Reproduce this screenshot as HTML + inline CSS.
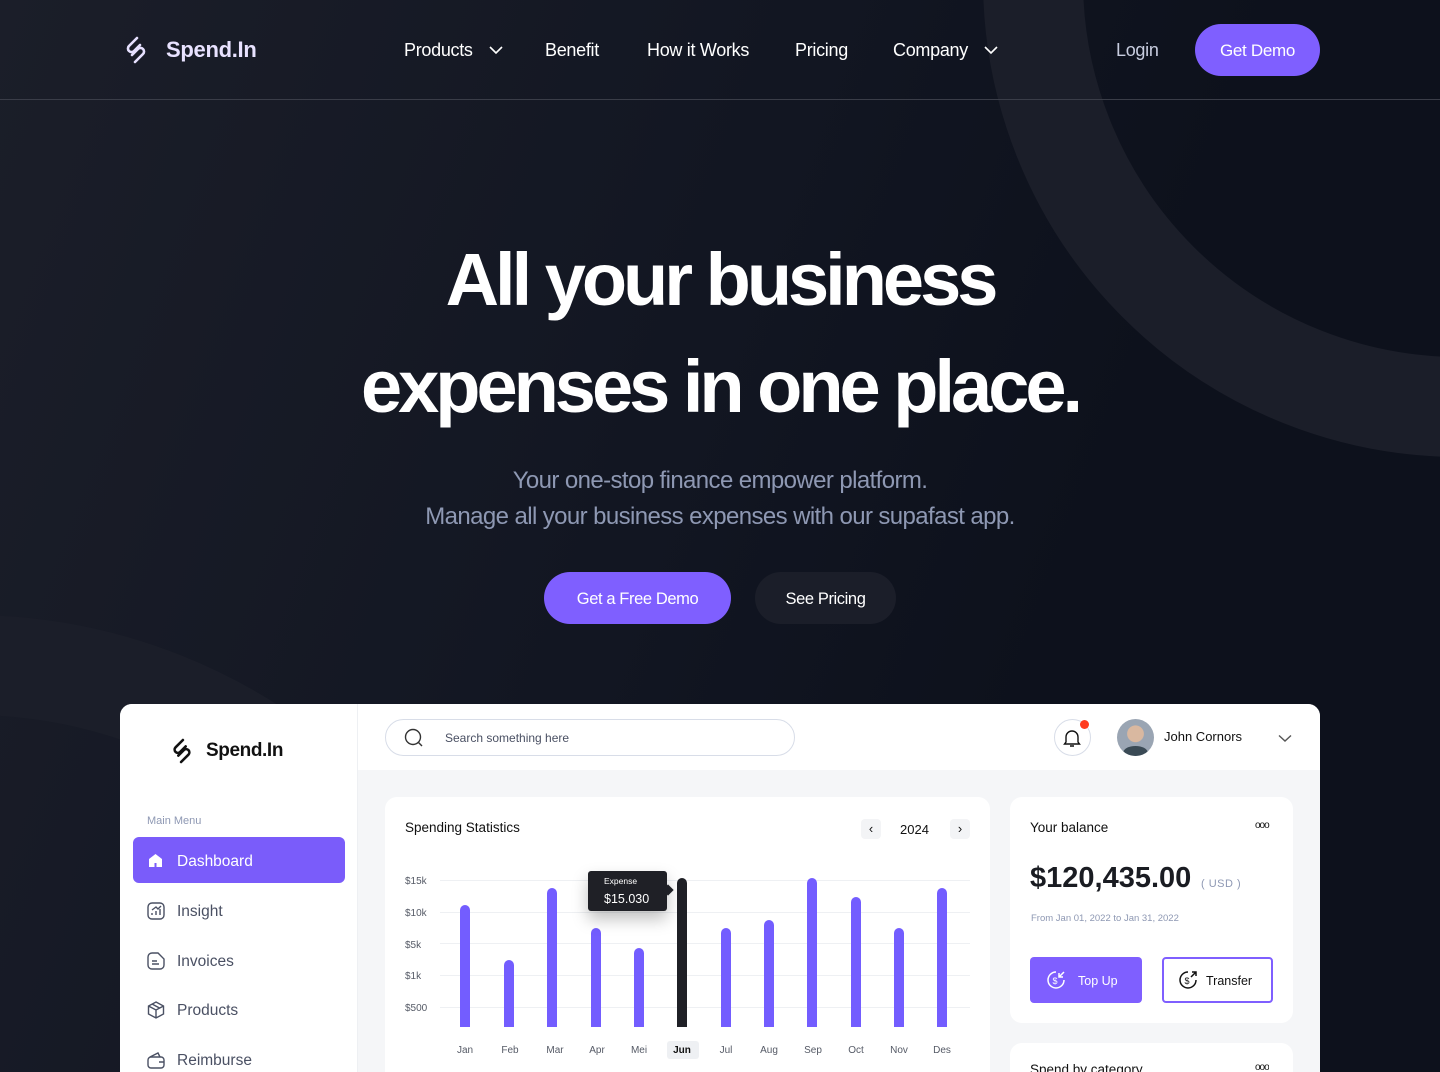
<!DOCTYPE html>
<html><head><meta charset="utf-8"><style>
*{margin:0;padding:0;box-sizing:border-box}
html,body{width:1440px;height:1072px;overflow:hidden}
body{background:#0d111c;font-family:"Liberation Sans",sans-serif;position:relative}
.a{position:absolute}
.bg{left:0;top:0;width:1440px;height:1072px;background:linear-gradient(110deg,#1b1e29 0%,#121622 45%,#0d111c 70%)}
.nav{color:#fff;font-size:18px;top:40px;letter-spacing:-0.3px}
.card{background:#fff;border-radius:12px}
.mi{left:147px;font-size:15.5px;color:#4a5063}
.lbl{font-size:10px;color:#555a66}
.mon{font-size:10px;color:#555a66;top:1045px;width:40px;text-align:center}
.bar{width:10px;background:#735dff;border-radius:5px 5px 0 0}
</style></head><body>
<div class="a bg"></div>
<svg class="a" style="left:0;top:0" width="1440" height="1072">
<circle cx="1460" cy="-20" r="427" fill="none" stroke="#1b1e29" stroke-width="100"/>
<circle cx="-30" cy="1187" r="522" fill="none" stroke="#1b1e29" stroke-width="100"/>
</svg>
<div class="a" style="left:0;top:99px;width:1440px;height:1px;background:#3a3d48"></div>
<svg class="a" style="left:124px;top:35px" width="24" height="30" viewBox="0 0 24 30"><path d="M13 3 L5 11 a3.5 3.5 0 0 0 5 5 L16 10 M11 27 L19 19 a3.5 3.5 0 0 0 -5 -5 L8 20" fill="none" stroke="#e6e0ff" stroke-width="2.6" stroke-linecap="round"/></svg>
<div class="a" style="left:166px;top:37px;color:#e8e2ff;font-size:22px;font-weight:bold;letter-spacing:-0.3px">Spend.In</div>
<div class="a nav" style="left:404px">Products</div>
<svg class="a" style="left:489px;top:45px" width="14" height="10"><path d="M1 2l6 6 6-6" fill="none" stroke="#fff" stroke-width="1.6"/></svg>
<div class="a nav" style="left:545px">Benefit</div>
<div class="a nav" style="left:647px">How it Works</div>
<div class="a nav" style="left:795px">Pricing</div>
<div class="a nav" style="left:893px">Company</div>
<svg class="a" style="left:984px;top:45px" width="14" height="10"><path d="M1 2l6 6 6-6" fill="none" stroke="#fff" stroke-width="1.6"/></svg>
<div class="a nav" style="left:1116px;color:#c8cde0">Login</div>
<div class="a" style="left:1195px;top:24px;width:125px;height:52px;border-radius:26px;background:#7f5fff;color:#fff;font-size:17px;text-align:center;line-height:54px;letter-spacing:-0.3px">Get Demo</div>
<div class="a" style="left:0;width:1440px;top:226px;text-align:center;color:#fff;font-size:74px;font-weight:bold;letter-spacing:-4px;line-height:107px">All your business<br>expenses in one place.</div>
<div class="a" style="left:0;width:1440px;top:463px;text-align:center;color:#8e98b3;font-size:24px;line-height:36px;letter-spacing:-0.6px">Your one-stop finance empower platform.<br>Manage all your business expenses with our supafast app.</div>
<div class="a" style="left:544px;top:572px;width:187px;height:52px;border-radius:26px;background:#7f5fff;color:#fff;font-size:16.5px;text-align:center;line-height:54px;letter-spacing:-0.4px">Get a Free Demo</div>
<div class="a" style="left:755px;top:572px;width:141px;height:52px;border-radius:26px;background:#1b1e29;color:#fff;font-size:16.5px;text-align:center;line-height:54px;letter-spacing:-0.4px">See Pricing</div>
<div class="a" style="left:120px;top:704px;width:1200px;height:368px;background:#f5f6f8;border-radius:12px 12px 0 0;overflow:hidden">
 <div class="a" style="left:0;top:0;width:238px;height:368px;background:#fff;border-right:1px solid #eef0f3"></div>
 <div class="a" style="left:238px;top:0;width:962px;height:66px;background:#fff"></div>
 <div class="a card" style="left:265px;top:93px;width:605px;height:300px"></div>
 <div class="a card" style="left:890px;top:339px;width:283px;height:60px"></div>
</div>
<svg class="a" style="left:171px;top:737px" width="22" height="28" viewBox="0 0 24 30"><path d="M13 3 L5 11 a3.5 3.5 0 0 0 5 5 L16 10 M11 27 L19 19 a3.5 3.5 0 0 0 -5 -5 L8 20" fill="none" stroke="#111" stroke-width="2.8" stroke-linecap="round"/></svg>
<div class="a" style="left:206px;top:740px;font-size:19px;font-weight:bold;color:#111;letter-spacing:-0.4px">Spend.In</div>
<div class="a" style="left:147px;top:815px;font-size:11px;color:#8e98b3">Main Menu</div>
<div class="a" style="left:133px;top:837px;width:212px;height:46px;border-radius:6px;background:#7a5cfa"></div>
<svg class="a" style="left:147px;top:852px" width="17" height="17"><path d="M2 7l6.5-5 6.5 5v8H2z" fill="#fff"/><rect x="7.5" y="11" width="2" height="4" fill="#7a5cfa"/></svg>
<div class="a" style="left:177px;top:853px;color:#fff;font-size:15.5px">Dashboard</div>
<svg class="a" style="left:147px;top:902px" width="18" height="18" fill="none" stroke="#4a5063" stroke-width="1.4"><rect x="1" y="1" width="16" height="16" rx="4"/><path d="M5 13v-2M9 13V9M13 13V7M5 8l4-3 2 2 3-3"/></svg>
<div class="a mi" style="left:177px;top:903px">Insight</div>
<svg class="a" style="left:147px;top:952px" width="18" height="18" fill="none" stroke="#4a5063" stroke-width="1.4"><path d="M5 1h6l6 6v6a4 4 0 0 1-4 4H5a4 4 0 0 1-4-4V5a4 4 0 0 1 4-4z"/><path d="M5 9h5M5 12h7"/></svg>
<div class="a mi" style="left:177px;top:953px">Invoices</div>
<svg class="a" style="left:147px;top:1001px" width="18" height="18" fill="none" stroke="#4a5063" stroke-width="1.4"><path d="M9 1l7.5 4v8L9 17l-7.5-4V5zM1.5 5L9 9l7.5-4M9 9v8M5 3l7.5 4"/></svg>
<div class="a mi" style="left:177px;top:1002px">Products</div>
<svg class="a" style="left:147px;top:1051px" width="18" height="18" fill="none" stroke="#4a5063" stroke-width="1.4"><rect x="1" y="6" width="16" height="11" rx="3"/><path d="M3 6l8-4 2 4M12 11h5"/></svg>
<div class="a mi" style="left:177px;top:1052px">Reimburse</div>
<div class="a" style="left:385px;top:719px;width:410px;height:37px;border:1px solid #d8dde8;border-radius:19px"></div>
<svg class="a" style="left:404px;top:728px" width="20" height="20" fill="none" stroke="#333" stroke-width="1.4"><circle cx="9" cy="9" r="7.5"/><path d="M14.5 14.5l3.5 3.5"/></svg>
<div class="a" style="left:445px;top:731px;font-size:12px;color:#4a5063">Search something here</div>
<div class="a" style="left:1054px;top:719px;width:37px;height:37px;border:1px solid #d8dde8;border-radius:50%"></div>
<svg class="a" style="left:1063px;top:728px" width="18" height="20" fill="none" stroke="#111" stroke-width="1.4"><path d="M3 14V9a6 6 0 0 1 12 0v5l1.5 2h-15zM7 18h4"/></svg>
<div class="a" style="left:1080px;top:720px;width:9px;height:9px;border-radius:50%;background:#ff3b1f"></div>
<div class="a" style="left:1117px;top:719px;width:37px;height:37px;border-radius:50%;background:radial-gradient(circle at 50% 40%,#d9b8a0 0 28%,#9aa5b3 30%);overflow:hidden"><div class="a" style="left:6px;top:27px;width:25px;height:14px;border-radius:50%;background:#3a4a55"></div></div>
<div class="a" style="left:1164px;top:729px;font-size:13px;color:#111">John Cornors</div>
<svg class="a" style="left:1278px;top:734px" width="14" height="9"><path d="M1 1.5l6 5.5 6-5.5" fill="none" stroke="#555" stroke-width="1.4"/></svg>
<div class="a" style="left:405px;top:820px;font-size:13.5px;color:#111">Spending Statistics</div>
<div class="a" style="left:861px;top:819px;width:20px;height:20px;background:#f3f4f6;border-radius:4px;font-size:13px;text-align:center;line-height:20px;color:#111">&#8249;</div>
<div class="a" style="left:900px;top:822px;font-size:13px;color:#111">2024</div>
<div class="a" style="left:950px;top:819px;width:20px;height:20px;background:#f3f4f6;border-radius:4px;font-size:13px;text-align:center;line-height:20px;color:#111">&#8250;</div>
<div class="a" style="left:440px;top:880px;width:530px;height:1px;background:#eef0f3"></div>
<div class="a" style="left:440px;top:912px;width:530px;height:1px;background:#eef0f3"></div>
<div class="a" style="left:440px;top:943px;width:530px;height:1px;background:#eef0f3"></div>
<div class="a" style="left:440px;top:975px;width:530px;height:1px;background:#eef0f3"></div>
<div class="a" style="left:440px;top:1007px;width:530px;height:1px;background:#eef0f3"></div>
<div class="a lbl" style="left:405px;top:876px">$15k</div>
<div class="a lbl" style="left:405px;top:908px">$10k</div>
<div class="a lbl" style="left:405px;top:940px">$5k</div>
<div class="a lbl" style="left:405px;top:971px">$1k</div>
<div class="a lbl" style="left:405px;top:1003px">$500</div>
<div class="a bar" style="left:460px;top:905px;height:122px"></div>
<div class="a bar" style="left:504px;top:960px;height:67px"></div>
<div class="a bar" style="left:547px;top:888px;height:139px"></div>
<div class="a bar" style="left:591px;top:928px;height:99px"></div>
<div class="a bar" style="left:634px;top:948px;height:79px"></div>
<div class="a bar" style="left:677px;top:878px;height:149px;background:#1f2026"></div>
<div class="a bar" style="left:721px;top:928px;height:99px"></div>
<div class="a bar" style="left:764px;top:920px;height:107px"></div>
<div class="a bar" style="left:807px;top:878px;height:149px"></div>
<div class="a bar" style="left:851px;top:897px;height:130px"></div>
<div class="a bar" style="left:894px;top:928px;height:99px"></div>
<div class="a bar" style="left:937px;top:888px;height:139px"></div>
<div class="a" style="left:588px;top:871px;width:79px;height:40px;background:#1f2026;border-radius:3px;box-shadow:0 8px 16px rgba(0,0,0,.25)"></div>
<div class="a" style="left:664px;top:886px;width:8px;height:8px;background:#1f2026;transform:rotate(45deg)"></div>
<div class="a" style="left:604px;top:876px;font-size:8.5px;color:#fff">Expense</div>
<div class="a" style="left:604px;top:892px;font-size:12.5px;color:#fff">$15.030</div>
<div class="a mon" style="left:445px">Jan</div>
<div class="a mon" style="left:490px">Feb</div>
<div class="a mon" style="left:535px">Mar</div>
<div class="a mon" style="left:577px">Apr</div>
<div class="a mon" style="left:619px">Mei</div>
<div class="a" style="left:667px;top:1041px;width:32px;height:18px;background:#eef0f3;border-radius:3px"></div>
<div class="a mon" style="left:662px;color:#111;font-weight:bold">Jun</div>
<div class="a mon" style="left:706px">Jul</div>
<div class="a mon" style="left:749px">Aug</div>
<div class="a mon" style="left:793px">Sep</div>
<div class="a mon" style="left:836px">Oct</div>
<div class="a mon" style="left:879px">Nov</div>
<div class="a mon" style="left:922px">Des</div>
<div class="a card" style="left:1010px;top:797px;width:283px;height:226px"></div>
<div class="a" style="left:1030px;top:820px;font-size:13.5px;color:#111">Your balance</div>
<div class="a" style="left:1255px;top:820px;font-size:10px;color:#111;letter-spacing:-1px">ooo</div>
<div class="a" style="left:1030px;top:862px;font-size:29px;font-weight:bold;color:#1a1c22">$120,435.00</div>
<div class="a" style="left:1201px;top:878px;font-size:11px;color:#8e98b3;letter-spacing:0.5px">( USD )</div>
<div class="a" style="left:1031px;top:913px;font-size:9.5px;color:#8e98b3">From Jan 01, 2022 to Jan 31, 2022</div>
<div class="a" style="left:1030px;top:957px;width:112px;height:46px;background:#7f5fff;border-radius:4px"></div>
<svg class="a" style="left:1046px;top:970px" width="20" height="20" fill="none" stroke="#fff" stroke-width="1.5"><path d="M18 10a8 8 0 1 1-8-8"/><path d="M18 2l-5 5M13 3v4h4"/><text x="6.5" y="14" font-size="9" fill="#fff" stroke="none" font-family="Liberation Sans">$</text></svg>
<div class="a" style="left:1078px;top:974px;font-size:12.5px;color:#fff">Top Up</div>
<div class="a" style="left:1162px;top:957px;width:111px;height:46px;border:2px solid #7f5fff;border-radius:4px"></div>
<svg class="a" style="left:1178px;top:970px" width="20" height="20" fill="none" stroke="#111" stroke-width="1.5"><path d="M18 10a8 8 0 1 1-8-8"/><path d="M13 7l5-5M14 2h4v4"/><text x="6.5" y="14" font-size="9" fill="#111" stroke="none" font-family="Liberation Sans">$</text></svg>
<div class="a" style="left:1206px;top:974px;font-size:12.5px;color:#111">Transfer</div>
<div class="a" style="left:1030px;top:1062px;font-size:13.5px;color:#111;height:10px;overflow:hidden;line-height:16px">Spend by category</div>
<div class="a" style="left:1255px;top:1062px;font-size:10px;color:#111;letter-spacing:-1px;height:10px;overflow:hidden">ooo</div>
</body></html>
